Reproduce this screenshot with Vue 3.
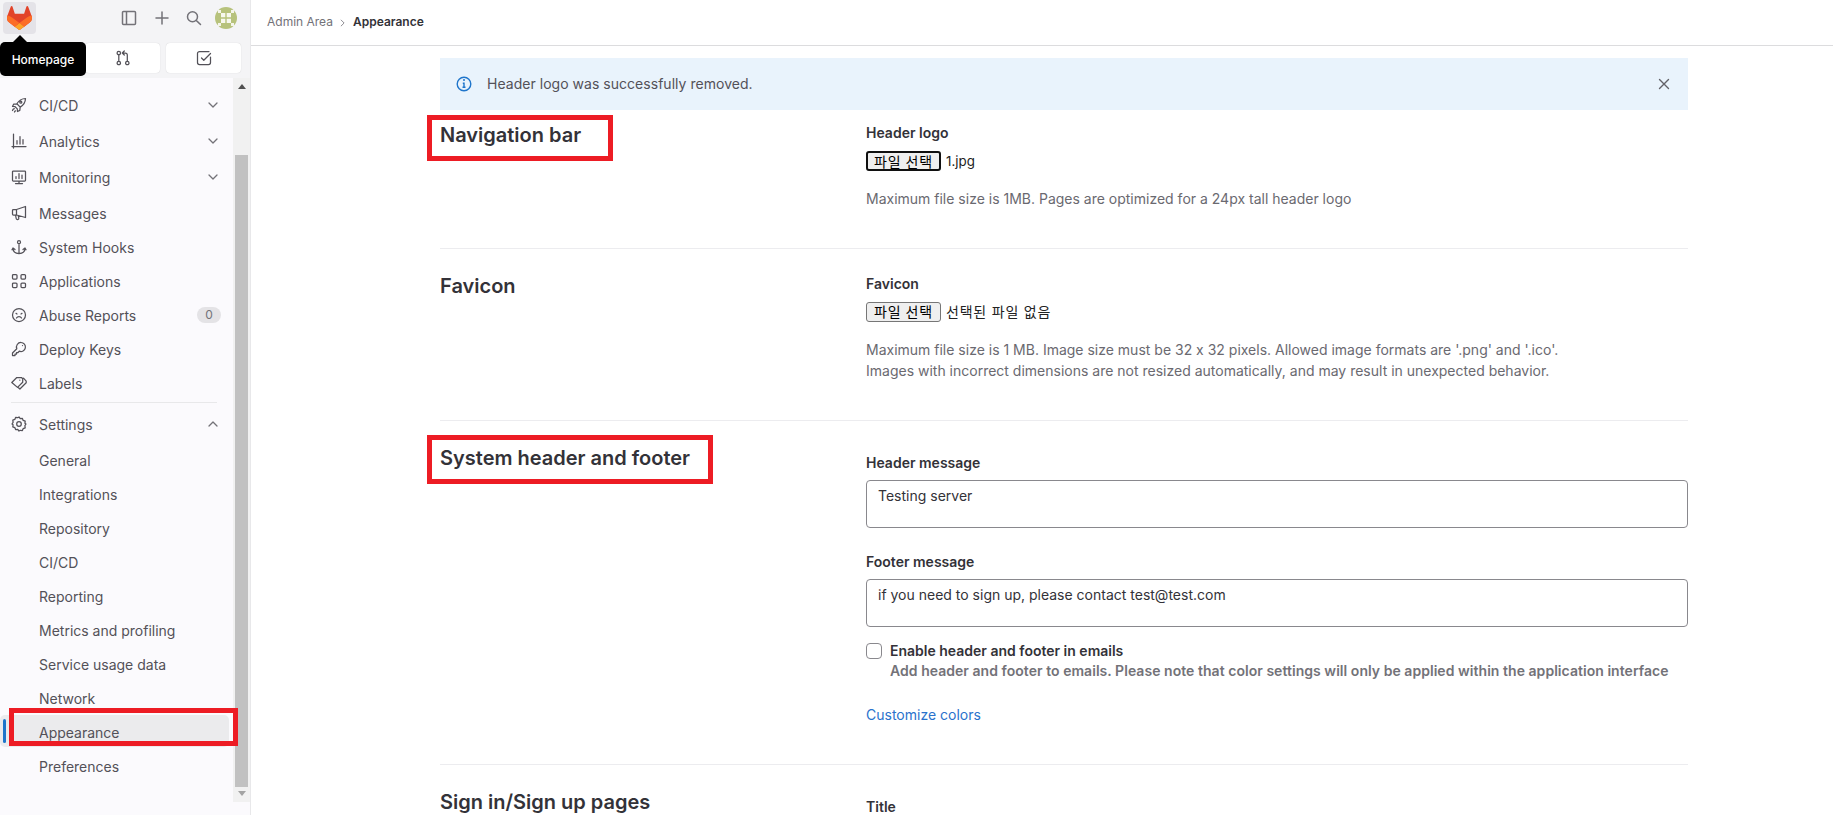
<script setup>
const icons = {
  rocket: 'M14.500 1.500c-3.600.1-6.600 1.900-8.600 5.300l3.300 3.300c3.400-2 5.200-5 5.300-8.600zM5.900 6.800 2.600 7.200 1.500 9.500l2.600.2M9.200 10.100l-.4 3.300-2.300 1.100-.2-2.600M4.100 9.700l2.200 2.200M10.800 5.200a1 1 0 1 1-2 0 1 1 0 0 1 2 0zM1.500 13.500c.3-1 .8-1.500 1.800-1.800M3.500 15c.2-.6.5-1 1-1.200',
  analytics: 'M2.500 1v14M1 13.500h14M6 11V7.500M9 11V3.500M12 11V6.500',
  monitor: 'M2.300 2h11.400a.8.8 0 0 1 .8.8v8.400a.8.8 0 0 1-.8.8H2.300a.8.8 0 0 1-.8-.8V2.800a.8.8 0 0 1 .8-.8zM8 12v2.500M4.500 14.500h7M5 9.500V7.500M8 9.500V4.500M11 9.500V6',
  messages: 'M14.500 1.500v11L5.500 10H2.500a1 1 0 0 1-1-1V5.500a1 1 0 0 1 1-1h3zM5.500 4.500V10M4.500 10l.7 3.500a1.300 1.300 0 0 0 2.600-.4L7.300 10.800',
  anchor: 'M8 5v9.500M9.500 3.200a1.500 1.500 0 1 1-3 0 1.500 1.500 0 0 1 3 0zM8 14.500c-3.500 0-6-2-6-5.500l2 1.500M2 9l-1 1.800M8 14.500c3.500 0 6-2 6-5.500l-2 1.500M14 9l1 1.800',
  apps: 'M2.500 1.500h2.500a1 1 0 0 1 1 1V5a1 1 0 0 1-1 1H2.500a1 1 0 0 1-1-1V2.500a1 1 0 0 1 1-1zM11 1.500h2.500a1 1 0 0 1 1 1V5a1 1 0 0 1-1 1H11a1 1 0 0 1-1-1V2.500a1 1 0 0 1 1-1zM2.500 10H5a1 1 0 0 1 1 1v2.500a1 1 0 0 1-1 1H2.500a1 1 0 0 1-1-1V11a1 1 0 0 1 1-1zM11 10h2.500a1 1 0 0 1 1 1v2.500a1 1 0 0 1-1 1H11a1 1 0 0 1-1-1V11a1 1 0 0 1 1-1z',
  abuse: 'M14.500 8a6.500 6.500 0 1 1-13 0 6.500 6.500 0 0 1 13 0zM5.500 11c.5-1 1.500-1.500 2.500-1.500s2 .5 2.500 1.500M5 6.300l1 .7M11 6.300l-1 .7',
  key: 'M10 1.500a4.500 4.500 0 1 1-1.700 8.700L7 11.500H5.500V13H4v1.500H1.500V12l4.300-4.300A4.500 4.500 0 0 1 10 1.500zM11.500 4.500h.01',
  label: 'M.8 7.500 5.800 2.500h4.700l1.200 1.200v3.500l-5.200 5.200zM8.800 5.200h.01M12.500 3.200l2.700 3v1.600l-6.300 6.200-2-1.800',
  gear: 'M8 1l1.300 1.700 2.100-.3.800 2 2 .8-.3 2.100L15 8l-1.100 1.700.3 2.100-2 .8-.8 2-2.100-.3L8 15l-1.300-1.700-2.100.3-.8-2-2-.8.3-2.100L1 8l1.100-1.700-.3-2.100 2-.8.8-2 2.100.3zM10.300 8a2.300 2.300 0 1 1-4.600 0 2.300 2.300 0 0 1 4.600 0z'
}
const topItems = [
  { label: 'CI/CD', icon: 'rocket', chevron: 'down', cls: 'tall' },
  { label: 'Analytics', icon: 'analytics', chevron: 'down', cls: 'tall' },
  { label: 'Monitoring', icon: 'monitor', chevron: 'down', cls: 'tall' },
  { label: 'Messages', icon: 'messages', cls: 'first-short' },
  { label: 'System Hooks', icon: 'anchor' },
  { label: 'Applications', icon: 'apps' },
  { label: 'Abuse Reports', icon: 'abuse', badge: '0' },
  { label: 'Deploy Keys', icon: 'key' },
  { label: 'Labels', icon: 'label' }
]
const subItems = ['General', 'Integrations', 'Repository', 'CI/CD', 'Reporting', 'Metrics and profiling', 'Service usage data', 'Network', 'Appearance', 'Preferences']
</script>

<template>
  <div class="app">
    <aside class="sidebar">
      <div class="top">
        <div class="topbar">
          <a class="logo">
            <svg width="25" height="24" viewBox="0 0 25 24">
              <path d="m24.507 9.5-.034-.09L21.082.562a.896.896 0 0 0-1.694.091l-2.29 7.01H7.825L5.535.653a.898.898 0 0 0-1.694-.09L.451 9.411.416 9.5a6.297 6.297 0 0 0 2.09 7.278l.012.01.03.022 5.16 3.867 2.56 1.935 1.554 1.176a1.051 1.051 0 0 0 1.268 0l1.555-1.176 2.56-1.935 5.197-3.89.014-.01A6.297 6.297 0 0 0 24.507 9.5Z" fill="#E24329"/>
              <path d="m24.507 9.5-.034-.09a11.44 11.44 0 0 0-4.56 2.051l-7.447 5.632 4.742 3.584 5.197-3.89.014-.01A6.297 6.297 0 0 0 24.507 9.5Z" fill="#FC6D26"/>
              <path d="m7.707 20.677 2.56 1.935 1.555 1.176a1.051 1.051 0 0 0 1.268 0l1.555-1.176 2.56-1.935-4.743-3.584-4.755 3.584Z" fill="#FCA326"/>
              <path d="M5.01 11.461a11.43 11.43 0 0 0-4.56-2.05L.416 9.5a6.297 6.297 0 0 0 2.09 7.278l.012.01.03.022 5.16 3.867 4.745-3.584-7.444-5.632Z" fill="#FC6D26"/>
            </svg>
          </a>
          <div class="top-tools">
            <svg class="ico tool" viewBox="0 0 16 16"><path d="M2.500 1.500h11a1 1 0 0 1 1 1v11a1 1 0 0 1-1 1h-11a1 1 0 0 1-1-1v-11a1 1 0 0 1 1-1zM5.500 1.500v13"/></svg>
            <svg class="ico tool" viewBox="0 0 16 16"><path d="M8 2v12M2 8h12"/></svg>
            <svg class="ico tool search" viewBox="0 0 16 16"><path d="M11.500 6.800a5 5 0 1 1-10 0 5 5 0 0 1 10 0zM10.200 10.400l4.300 4.100"/></svg>
            <svg class="avatar" width="22" height="22" viewBox="0 0 22 22">
              <circle cx="11" cy="11" r="11" fill="#b7c27c"/>
              <path d="M3 3h3v3H3zM16 3h3v3h-3zM3 16h3v3H3zM16 16h3v3h-3z" fill="#f4f5ea"/>
              <rect x="6" y="6" width="10" height="10" fill="#f7f8ef"/>
              <path d="M11 6v10M6 11h10" stroke="#b7c27c" stroke-width="1.400"/>
            </svg>
          </div>
        </div>
        <div class="actions">
          <button class="act" type="button"></button>
          <button class="act" type="button">
            <svg class="ico" viewBox="0 0 16 16"><path d="M5.500 3a1.700 1.700 0 1 1-3.400 0 1.700 1.700 0 0 1 3.400 0zM5.500 13a1.700 1.700 0 1 1-3.400 0 1.700 1.700 0 0 1 3.400 0zM14 13a1.700 1.700 0 1 1-3.400 0 1.700 1.700 0 0 1 3.400 0zM3.800 4.700v6.600M12.300 11.300V5a2 2 0 0 0-2-2H7.500M9.300 1 7.300 3l2 2"/></svg>
          </button>
          <button class="act" type="button">
            <svg class="ico" viewBox="0 0 16 16"><path d="M14.500 7v5.500a2 2 0 0 1-2 2h-9a2 2 0 0 1-2-2v-9a2 2 0 0 1 2-2h9.500M5.500 8l2.300 2.300 6.700-6.800"/></svg>
          </button>
        </div>
        <div class="tooltip">Homepage</div>
      </div>

      <div class="navrow">
        <nav class="nav">
          <a v-for="item in topItems" :key="item.label" class="item" :class="item.cls">
            <svg class="ico" viewBox="0 0 16 16"><path :d="icons[item.icon]"/></svg>
            <span class="grow">{{ item.label }}</span>
            <svg v-if="item.chevron" class="chev" viewBox="0 0 10 6"><path d="M1 1l4 4 4-4"/></svg>
            <span v-if="item.badge" class="badge">{{ item.badge }}</span>
          </a>
          <div class="navsep"></div>
          <a class="item tall settings">
            <svg class="ico" viewBox="0 0 16 16"><path :d="icons.gear"/></svg>
            <span class="grow">Settings</span>
            <svg class="chev" viewBox="0 0 10 6"><path d="M1 5l4-4 4 4"/></svg>
          </a>
          <a v-for="s in subItems" :key="s" class="item sub" :class="{ active: s === 'Appearance' }">
            <span class="grow">{{ s }}</span>
          </a>
        </nav>
        <div class="scrollbar">
          <i class="arrow up"></i>
          <div class="track"><div class="thumb"></div></div>
          <i class="arrow down"></i>
        </div>
      </div>
      <div class="mark mark-side"></div>
    </aside>

    <main class="main">
      <header class="crumbs">
        <span>Admin Area</span>
        <svg class="crumb-sep" viewBox="0 0 6 10"><path d="M1 1l4 4-4 4"/></svg>
        <strong>Appearance</strong>
      </header>

      <div class="content">
        <div class="alert">
          <svg class="info" viewBox="0 0 16 16"><circle cx="8" cy="8" r="6.800"/><path class="dot" d="M8 4.100h.01"/><path d="M6.800 7.200H8v4M6.500 11.300h3"/></svg>
          <span class="grow alert-text">Header logo was successfully removed.</span>
          <svg class="close" viewBox="0 0 12 12"><path d="M1.500 1.500l9 9M10.500 1.500l-9 9"/></svg>
        </div>

        <section class="sec sec1">
          <div class="heading"><h2>Navigation bar</h2><div class="mark mark-nav"></div></div>
          <div>
            <div class="lab">Header logo</div>
            <div class="file"><button class="filebtn focus" type="button">파일 선택</button><span class="fname">1.jpg</span></div>
            <p class="help h1">Maximum file size is 1MB. Pages are optimized for a 24px tall header logo</p>
          </div>
        </section>

        <section class="sec sec2">
          <div class="heading"><h2>Favicon</h2></div>
          <div>
            <div class="lab">Favicon</div>
            <div class="file"><button class="filebtn" type="button">파일 선택</button><span class="fname ko">선택된 파일 없음</span></div>
            <p class="help h2">Maximum file size is 1 MB. Image size must be 32 x 32 pixels. Allowed image formats are '.png' and '.ico'.<br>Images with incorrect dimensions are not resized automatically, and may result in unexpected behavior.</p>
          </div>
        </section>

        <section class="sec sec3">
          <div class="heading"><h2>System header and footer</h2><div class="mark mark-sys"></div></div>
          <div class="fields">
            <div class="lab">Header message</div>
            <textarea class="ta" readonly>Testing server</textarea>
            <div class="lab lab2">Footer message</div>
            <textarea class="ta" readonly>if you need to sign up, please contact test@test.com</textarea>
            <div class="check">
              <span class="box"></span>
              <div>
                <div class="lab">Enable header and footer in emails</div>
                <div class="sublab">Add header and footer to emails. Please note that color settings will only be applied within the application interface</div>
              </div>
            </div>
            <a class="link">Customize colors</a>
          </div>
        </section>

        <section class="sec sec4">
          <div class="heading"><h2>Sign in/Sign up pages</h2></div>
          <div class="fields4"><div class="lab">Title</div></div>
        </section>
      </div>
    </main>
  </div>
</template>

<style>
html, body { margin: 0; height: 100%; overflow: hidden; background: #fff; }
</style>

<style scoped>
.app {
  display: flex;
  height: 815px;
  overflow: hidden;
  font-family: Inter, "Noto Sans CJK KR", "Liberation Sans", sans-serif;
  font-size: 14px;
  font-feature-settings: "calt" 0;
  color: #333238;
}
.grow { flex: 1; min-width: 0; }
.ico { width: 16px; height: 16px; flex: none; fill: none; stroke: #535158; stroke-width: 1.25; stroke-linecap: round; stroke-linejoin: round; }
.tool { stroke: #737278; stroke-width: 1.5; }

.sidebar { position: relative; width: 250px; flex: none; background: #fbfafd; border-right: 1px solid #e8e8ea; display: flex; flex-direction: column; }
.top { position: relative; height: 78px; flex: none; background: #f4f4f6; }
.topbar { height: 42px; display: flex; align-items: flex-start; padding: 2px 13px 0 3px; box-sizing: border-box; justify-content: space-between; }
.logo { width: 33px; height: 32px; background: #e4e3e8; border-radius: 4px; display: flex; align-items: center; justify-content: center; }
.top-tools { display: flex; align-items: center; gap: 17px; height: 32px; }
.search { margin-left: -1px; }
.avatar { flex: none; margin-left: -4px; }
.actions { display: grid; grid-template-columns: repeat(3, 75px); gap: 6px; padding: 1px 0 0 4px; }
.act { height: 30px; background: #fff; border: none; border-radius: 4px; box-shadow: 0 0 1px rgba(0,0,0,.2); padding: 0; display: flex; align-items: center; justify-content: center; }
.tooltip { position: absolute; left: 0; top: 42px; width: 86px; height: 34px; background: #000; color: #fff; border-radius: 5px; font-size: 12px; font-weight: 500; display: flex; align-items: center; justify-content: center; z-index: 3; }
.tooltip::before { content: ""; position: absolute; left: 13px; top: -7px; border-left: 7px solid transparent; border-right: 7px solid transparent; border-bottom: 7px solid #000; }

.navrow { display: flex; height: 724px; flex: none; }
.nav { flex: 1; min-width: 0; padding-top: 9px; }
.item { display: flex; align-items: center; gap: 12px; height: 34px; width: 229px; box-sizing: border-box; padding: 0 12px 0 11px; color: #535158; position: relative; }
.item.tall { height: 36px; }
.item.settings { margin-bottom: 1px; }
.item.first-short { margin-top: 1px; }
.item.sub { padding-left: 39px; }
.chev { width: 10px; height: 6px; flex: none; margin-right: -1px; fill: none; stroke: #737278; stroke-width: 1.3; stroke-linecap: round; stroke-linejoin: round; }
.badge { width: 24px; height: 16px; border-radius: 8px; background: #e4e3e6; color: #737278; font-size: 12px; text-align: center; line-height: 16px; margin-right: -4px; }
.navsep { height: 1px; background: #e8e8ea; margin: 2px 16px 3px 11px; width: 206px; }
.item.sub.active { background: #ebebed; border-radius: 5px; height: 32px; padding-top: 2px; }
.active::before { content: ""; position: absolute; left: 3px; top: 4px; width: 3px; height: 24px; border-radius: 2px; background: #1f75cb; }
.item.sub.active + .sub { margin-top: 2px; }

.scrollbar { width: 17px; flex: none; background: #f1f1f1; display: flex; flex-direction: column; align-items: center; }
.arrow { flex: none; width: 0; height: 0; border-left: 4px solid transparent; border-right: 4px solid transparent; }
.arrow.up { margin-top: 6px; border-bottom: 5px solid #505050; }
.arrow.down { margin-bottom: 6px; border-top: 5px solid #a3a3a3; }
.track { flex: 1; width: 100%; padding-top: 66px; padding-bottom: 4px; box-sizing: border-box; display: flex; justify-content: center; }
.thumb { width: 13px; background: #c1c1c1; }

.main { flex: 1; min-width: 0; }
.crumbs { height: 45px; box-sizing: content-box; border-bottom: 1px solid #dcdcde; display: flex; align-items: center; padding-left: 16px; font-size: 12px; color: #737278; }
.crumbs span, .crumbs strong { position: relative; top: -1px; }
.crumbs strong { color: #333238; font-weight: 600; }
.crumb-sep { width: 5px; height: 8px; margin: 0 8px 0 7px; fill: none; stroke: #737278; stroke-width: 1; }

.content { width: 1248px; margin-left: 189px; padding-top: 12px; }
.alert { height: 52px; box-sizing: border-box; background: #e9f3fc; display: flex; align-items: center; padding: 0 18px 0 16px; color: #535158; gap: 15px; }
.alert-text { letter-spacing: .03px; padding-bottom: 1px; }
.info { width: 16px; height: 16px; flex: none; fill: none; stroke: #1f75cb; stroke-width: 1.4; }
.info .dot { stroke-width: 2; stroke-linecap: round; }
.close { width: 12px; height: 12px; flex: none; fill: none; stroke: #626168; stroke-width: 1.4; stroke-linecap: round; }

.sec { display: grid; grid-template-columns: 426px 1fr; border-bottom: 1px solid #ececef; }
.sec4 { border-bottom: none; }
.sec1 { padding: 13px 0 39px; }
.sec2 { padding: 25px 0 39px; }
.sec3 { padding: 25px 0 39px; }
.sec4 { padding: 25px 0 0; }
.heading { position: relative; }
h2 { margin: 0; font-size: 20px; line-height: 24px; font-weight: 600; color: #333238; }
.lab { font-weight: 600; line-height: 20px; color: #333238; }
.file { display: flex; align-items: center; gap: 5px; margin-top: 8px; height: 20px; font-size: 13.33px; color: #222; }
.fname { padding-bottom: 1px; }
.fname.ko { font-size: 14px; letter-spacing: .8px; padding-bottom: 3px; }
.filebtn { width: 75px; height: 20px; box-sizing: border-box; padding: 0 0 2px; background: #efefef; border: 1px solid #767676; border-radius: 3px; font: 14px "Noto Sans CJK KR", sans-serif; line-height: 16px; color: #000; letter-spacing: .9px; }
.filebtn.focus { border: 2px solid #101010; }
.help { margin: 17px 0 0; line-height: 21px; color: #6a6970; }
.fields { padding-top: 7px; }
.fields4 { padding-top: 7px; }
.ta { display: block; width: 100%; height: 48px; box-sizing: border-box; margin: 7px 0 0; padding: 5px 11px; border: 1px solid #89888d; border-radius: 4px; font: 14px/20px Inter, sans-serif; color: #333238; resize: none; outline: none; background: #fff; }
.lab2 { margin-top: 24px; }
.check { display: flex; gap: 8px; margin-top: 14px; }
.box { width: 16px; height: 16px; flex: none; box-sizing: border-box; border: 1px solid #89888d; border-radius: 4px; margin-top: 2px; background: #fff; }
.sublab { line-height: 20px; color: #737278; font-weight: 600; letter-spacing: .04px; }
.link { display: block; margin-top: 24px; line-height: 20px; color: #2a72cc; }

.mark { position: absolute; border: 5px solid #ed1c24; box-sizing: border-box; pointer-events: none; z-index: 4; }
.mark-nav { left: -13px; top: -8px; width: 186px; height: 46px; }
.mark-sys { left: -13px; top: -11px; width: 286px; height: 49px; }
.mark-side { left: 9px; top: 708px; width: 229px; height: 38px; }
</style>
